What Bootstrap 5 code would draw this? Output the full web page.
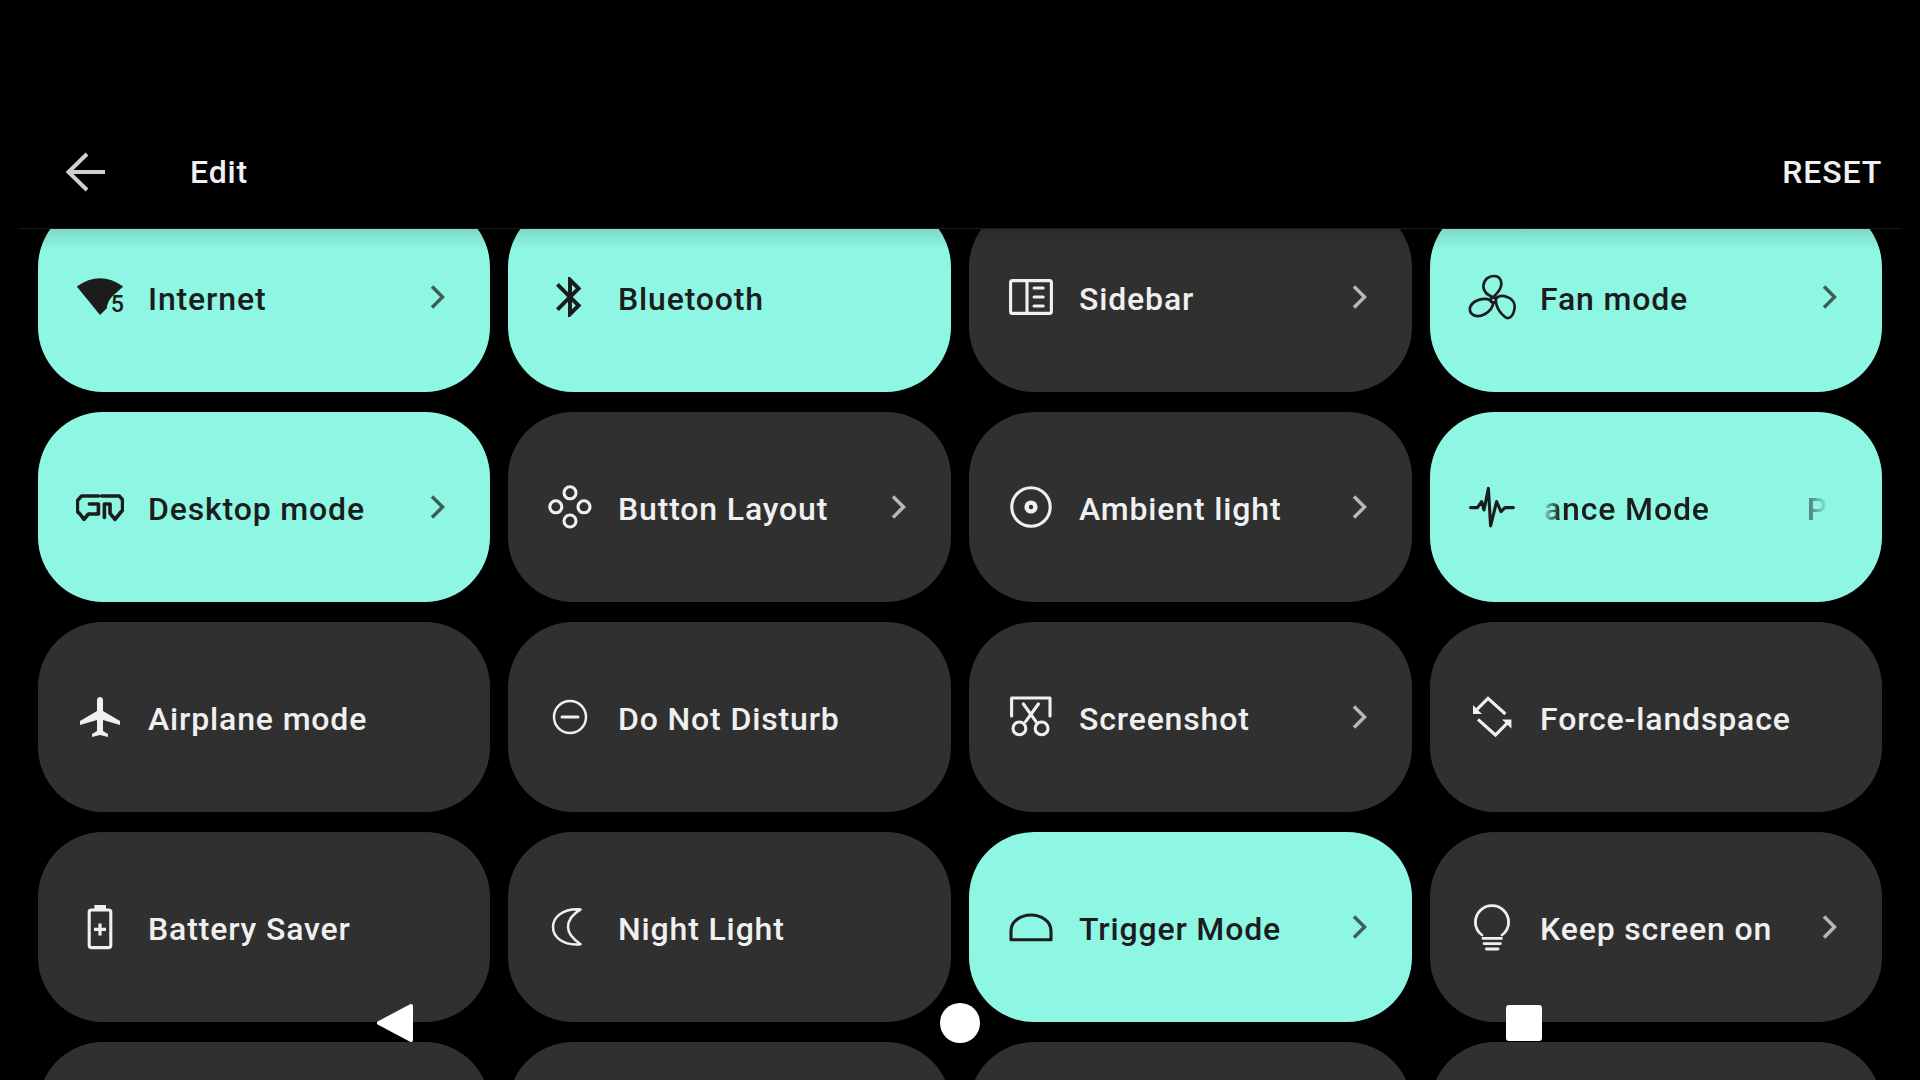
<!DOCTYPE html>
<html lang="en">
<head>
    <meta charset="UTF-8">
    <meta name="viewport" content="width=device-width, initial-scale=1.0">
    <title>Edit</title>
    <link rel="stylesheet" href="https://cdn.jsdelivr.net/npm/bootstrap@5.3.0/dist/css/bootstrap.min.css">
    <script src="https://cdn.jsdelivr.net/npm/bootstrap@5.3.0/dist/js/bootstrap.bundle.min.js"></script>
    <style>
        body {
            background: #000;
            font-family: Roboto, "Liberation Sans", sans-serif;
            font-size: 32px;
            font-weight: 500;
            letter-spacing: .85px;
            color: #f0f0f0;
        }
        .edit-head {
            height: 229px;
            margin: 0 19px;
            padding: 115px 19px 0 42px;
            border-bottom: 1px solid #1c1c1c;
        }
        .edit-title { margin-left: 81px; }
        .tile-scroll { height: 851px; }
        .tile-shade {
            top: 0;
            left: 0;
            right: 0;
            height: 22px;
            background: linear-gradient(rgba(0, 0, 0, .12), rgba(0, 0, 0, 0));
        }
        .tile-grid {
            display: grid;
            grid-template-columns: 452px 443px 443px 452px;
            grid-auto-rows: 190px;
            column-gap: 18px;
            row-gap: 20px;
            margin: -27px 0 0 38px;
        }
        .qs-tile {
            background: #303030;
            border-radius: 65px;
            padding: 0 45px 0 38px;
            fill: none;
            stroke: #f0f0f0;
            line-height: 1;
        }
        .qs-tile.is-on {
            background: #8ef7e3;
            color: #1c1c1c;
            stroke: #1c1c1c;
        }
        .tile-icon { flex: 0 0 48px; margin-right: 24px; stroke-width: 1.55; stroke-linecap: round; stroke-linejoin: round; }
        .tile-icon .solid { fill: currentColor; stroke: none; }
        .tile-icon text { fill: currentColor; stroke: none; font-size: 11.6px; font-weight: 500; letter-spacing: 0; font-family: Roboto, sans-serif; }
        .tile-chevron { flex: 0 0 15px; margin-left: auto; stroke-width: 3.5; opacity: .7; }
        .tile-label { white-space: nowrap; padding-top: 3px; }
        .tile-marquee {
            width: 288px;
            padding-left: 4px;
            -webkit-mask-image: linear-gradient(90deg, transparent 2px, #000 20px, #000 252px, transparent 289px);
            mask-image: linear-gradient(90deg, transparent 2px, #000 20px, #000 252px, transparent 289px);
        }
        .nav-keys { left: 0; right: 0; bottom: 37px; gap: 526px; }
        .nav-key-back { width: 36px; height: 40px; overflow: visible; }
        .nav-key-home { width: 40px; height: 40px; background: #fff; }
        .nav-key-recent { width: 36px; height: 36px; background: #fff; border-radius: 3px; }
    </style>
</head>
<body class="overflow-hidden">
    <div class="position-relative vh-100 overflow-hidden">
        <header class="edit-head d-flex align-items-center">
            <svg width="48" height="48" viewBox="0 0 48 48" fill="none" stroke="#cfcfcf" stroke-width="4" aria-label="Back">
                <path d="M44 24H8M26 6 7.500 24 26 42"/>
            </svg>
            <span class="edit-title">Edit</span>
            <span class="ms-auto">RESET</span>
        </header>

        <main class="tile-scroll position-relative overflow-hidden">
            <div id="tiles" class="tile-grid"></div>
            <div class="tile-shade position-absolute"></div>
        </main>

        <!-- navigation bar floats over the list -->
        <div class="nav-keys position-absolute d-flex justify-content-center align-items-center">
            <svg class="nav-key-back" viewBox="2 0 36 40" aria-label="Back">
                <path d="M3 20 35 3V37Z" fill="#fff" stroke="#fff" stroke-width="4" stroke-linejoin="round"/>
            </svg>
            <div class="nav-key-home rounded-circle"></div>
            <div class="nav-key-recent"></div>
        </div>
    </div>

    <script>
        // icons are material style, drawn on a 24 unit box
        const icons = {
            wifi: `<path class="solid" d="M.4 6.800Q12-1.600 23.600 6.800L18.600 11.200Q15.800 13.600 15.400 17.600L12 21Z"/><text x="17.400" y="19.300">5</text>`,
            bluetooth: `<path class="solid" d="M17.710 7.710 12 2h-1v7.590L6.410 5 5 6.410 10.590 12 5 17.590 6.410 19 11 14.410V22h1l5.710-5.710-4.300-4.290 4.300-4.290zM13 5.830l1.880 1.880L13 9.590V5.830zm1.880 10.460L13 18.170v-3.760l1.880 1.880z"/>`,
            sidebar: `<rect x="1.800" y="3.800" width="20.400" height="16.400" rx="1"/><path d="M10 3.800v16.400"/><path d="M13.500 7.500h4.600M13.500 12h4.600M13.500 16.500h4.600" stroke-width="1.500"/>`,
            fan: `<circle cx="12.700" cy="13.500" r="1.300" stroke-width="1.300"/><path stroke-width="1.350" d="M12.700 12.200C9.500 11 7.500 9 7.700 6.300 8 3 10.500 1.500 13 1.500c2.500 0 4.200 2 3.500 5-.5 2.500-2.500 4-3.800 5.700M13.900 13c.8-1.500 3.100-2 5.600-1 3 1 4.500 3.500 3.500 7-.5 2.500-2.500 4.500-4.500 3-2.500-2-4.300-5-4.600-7.800M11.600 14.200C10.500 12.500 7 12.500 4 14c-3 1.500-3.700 4-2.500 6 1.500 2 4.500 2 7 .5 2.500-1.500 4-3.500 4.200-5.700"/>`,
            desktop: `<path stroke-width="1.800" d="M11.200 6.500H2.800L.7 8.800v5.500L2 15.500 4 18.200 6.200 15.500h5V10.500H6.700M12.800 6.500h8.900l1.600 2v5l-3.800 4.700L17 15.200V10.500h-2.800v6.700"/>`,
            layout: `<circle cx="12" cy="4.900" r="3"/><circle cx="4.900" cy="11.900" r="3"/><circle cx="19" cy="11.900" r="3"/><circle cx="12" cy="19" r="3"/>`,
            ambient: `<circle cx="12" cy="12" r="9.600"/><circle cx="12" cy="12" r="2.200" stroke-width="2.200"/>`,
            pulse: `<path d="M1.300 12.300H4.700L6.800 9.300 8 13.500 10.200 2.700 11.300 21.500 14.300 9.300 16.500 14.300 18.500 12.300H22.700"/>`,
            plane: `<path class="solid" d="M22 16v-2l-8.500-5V3.500C13.500 2.670 12.830 2 12 2s-1.500.67-1.500 1.500V9L2 14v2l8.500-2.500V19L8 20.500V22l4-1 4 1v-1.500L13.500 19v-5.500z"/>`,
            dnd: `<circle cx="12" cy="12" r="8" stroke-width="1.250"/><path d="M8 12h8" stroke-width="1.500"/>`,
            screenshot: `<path d="M2.300 11.500V2.500H21.500V11.500M8.200 5.500 14.500 14.300M15.700 5.500 9.300 14.300"/><circle cx="6.200" cy="17.700" r="3.200"/><circle cx="17.300" cy="17.700" r="3.200"/>`,
            rotate: `<path stroke-linecap="butt" stroke-linejoin="miter" d="M4.500 8.200 10 2.700 18.700 10.500M5 13.200 13.700 21 19.500 15.200"/><path class="solid" d="M2.500 6V10.500H7zM21.700 13.200H17L21.700 17.700z"/>`,
            battery: `<rect x="6.600" y="3.500" width="10.800" height="18.800" rx="1"/><path class="solid" d="M9.200 1h5.800v2.500H9.200z"/><path d="M9 13.200h6M12 10.200v6" stroke-width="1.600" stroke-linecap="butt"/>`,
            moon: `<path stroke-width="1.250" d="M17.300 3.200C8 2.500 3.500 7.500 3.500 12c0 5 5 9.500 13.800 8.600C13.500 18 11 15.500 11 12c0-3.500 2.500-6.500 6.300-8.800z"/>`,
            trigger: `<path d="M2 18.400V14C2 9 7 6 12 6c5 0 10 3 10 8v4.400z"/>`,
            bulb: `<path stroke-width="1.400" d="M7 16C5 14.500 3.700 12.300 3.700 9.600A8.300 8.300 0 0 1 20.300 9.600C20.300 12.300 19 14.500 17 16M7.500 17.700H16.700M8 20.300H16.200M9.200 23H15"/>`
        };

        const tiles = [
            { text: "Internet", icon: "wifi", on: true, more: true },
            { text: "Bluetooth", icon: "bluetooth", on: true },
            { text: "Sidebar", icon: "sidebar", more: true },
            { text: "Fan mode", icon: "fan", on: true, more: true },
            { text: "Desktop mode", icon: "desktop", on: true, more: true },
            { text: "Button Layout", icon: "layout", more: true },
            { text: "Ambient light", icon: "ambient", more: true },
            { marquee: true, icon: "pulse", on: true },
            { text: "Airplane mode", icon: "plane" },
            { text: "Do Not Disturb", icon: "dnd" },
            { text: "Screenshot", icon: "screenshot", more: true },
            { text: "Force-landspace", icon: "rotate" },
            { text: "Battery Saver", icon: "battery" },
            { text: "Night Light", icon: "moon" },
            { text: "Trigger Mode", icon: "trigger", on: true, more: true },
            { text: "Keep screen on", icon: "bulb", more: true },
            {}, {}, {}, {}
        ];

        const grid = document.getElementById("tiles");
        tiles.forEach(t => {
            const div = document.createElement("div");
            div.className = "qs-tile d-flex align-items-center" + (t.on ? " is-on" : "");
            let html = "";
            if (t.icon) {
                html += `<svg class="tile-icon" width="48" height="48" viewBox="0 0 24 24">${icons[t.icon]}</svg>`;
            }
            if (t.marquee) {
                html += `<div class="tile-marquee tile-label d-flex justify-content-between"><span>ance Mode</span><span>P</span></div>`;
            } else if (t.text) {
                html += `<span class="tile-label">${t.text}</span>`;
            }
            if (t.more) {
                html += `<svg class="tile-chevron" width="15" height="24" viewBox="0 0 15 24"><path d="M2 1.500 12.500 12 2 22.500"/></svg>`;
            }
            div.innerHTML = html;
            grid.appendChild(div);
        });
    </script>
</body>
</html>
